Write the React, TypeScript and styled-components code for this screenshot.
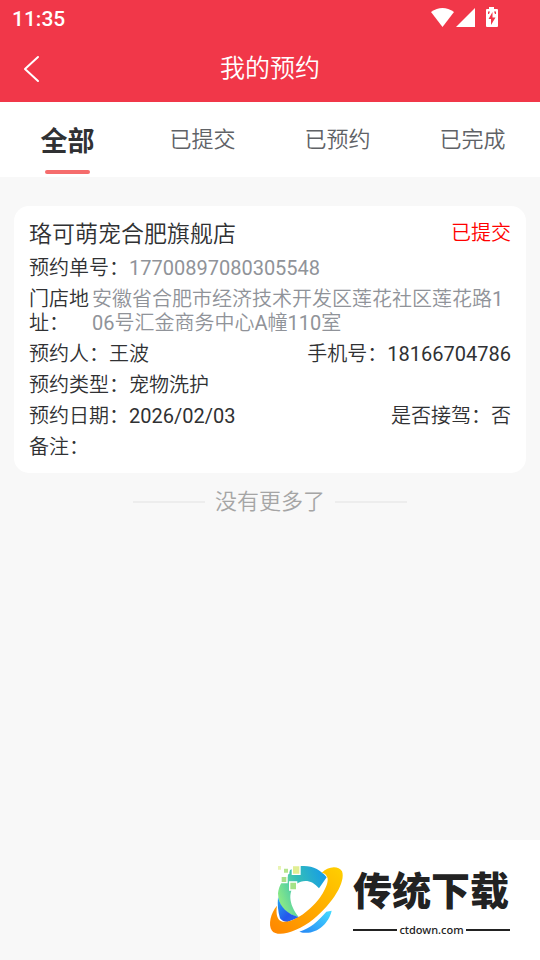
import React, { useState } from "react";
import styled, { createGlobalStyle } from "styled-components";

const GlobalStyle = createGlobalStyle`
  * { box-sizing: border-box; }
  body {
    margin: 0;
    background: #f8f8f8;
    color: #303133;
    font-family: Roboto, "Noto Sans CJK SC DemiLight", "Noto Sans CJK SC", sans-serif;
  }
  button { font-family: inherit; }
`;

const boldFont = 'Roboto, "Noto Sans CJK SC", sans-serif';

const Page = styled.div`
  min-height: 100vh;
  display: flex;
  flex-direction: column;
`;

const Header = styled.header`
  background: #f13749;
  color: #fff;
`;

const StatusBar = styled.div`
  display: flex;
  justify-content: space-between;
  align-items: center;
  height: 36px;
  padding: 0 41px 0 12px;
`;

const Clock = styled.time`
  font-size: 21px;
  font-weight: 500;
  line-height: 36px;
  padding-top: 2px;
`;

const NavBar = styled.div`
  display: grid;
  grid-template-columns: 66px 1fr 66px;
  align-items: center;
  height: 66px;
`;

const BackButton = styled.button`
  display: flex;
  align-items: center;
  height: 66px;
  padding: 0 0 0 22px;
  border: 0;
  background: none;
  color: inherit;
`;

const Title = styled.h1`
  margin: 0;
  font-size: 25px;
  font-weight: 400;
  line-height: 36px;
  text-align: center;
`;

const Tabs = styled.div`
  display: grid;
  grid-template-columns: repeat(4, 1fr);
  background: #fff;
`;

const Tab = styled.button<{ $active: boolean }>`
  display: flex;
  flex-direction: column;
  align-items: center;
  justify-content: space-between;
  height: 75px;
  padding: 0 0 3px;
  border: 0;
  background: none;
  font-family: ${(p) => (p.$active ? boldFont : "inherit")};
  font-size: ${(p) => (p.$active ? 27 : 22)}px;
  font-weight: ${(p) => (p.$active ? 700 : 400)};
  line-height: ${(p) => (p.$active ? 80 : 75)}px;
  color: ${(p) => (p.$active ? "#303133" : "#606266")};

  span { height: 68px; }

  &::after {
    content: "";
    width: 45px;
    height: 4px;
    border-radius: 2px;
    background: ${(p) => (p.$active ? "#f56c6c" : "transparent")};
  }
`;

const Content = styled.main`
  flex: 1;
  padding: 29px 14px;
`;

const Card = styled.article`
  display: flex;
  flex-direction: column;
  gap: 7px;
  padding: 15px 15px 14px;
  border-radius: 15px;
  background: #fff;
  font-size: 20px;
  line-height: 24px;
`;

const Row = styled.div`
  display: flex;
  justify-content: space-between;
`;

const StoreName = styled.h2`
  margin: 0;
  font-size: 23px;
  font-weight: 400;
  line-height: 28px;
`;

const State = styled.span`
  color: #ff0000;
`;

const Field = styled.div`
  display: flex;
`;

const AddressField = styled.div`
  display: grid;
  grid-template-columns: 63px 1fr;
`;

const Value = styled.span`
  color: #909399;
  word-break: break-all;
`;

const EndMark = styled.div`
  display: flex;
  align-items: center;
  justify-content: center;
  gap: 10px;
  padding-top: 13px;
  font-size: 22px;
  line-height: 32px;
  color: #a5a5a5;

  &::before,
  &::after {
    content: "";
    width: 72px;
    height: 2px;
    background: #ededed;
  }
`;

const Watermark = styled.aside`
  position: fixed;
  right: 0;
  bottom: 0;
  display: grid;
  grid-template-columns: 93px 157px;
  width: 280px;
  height: 120px;
  background: #fff;
  color: #222;
`;

const Brand = styled.div`
  display: flex;
  flex-direction: column;
  padding-top: 25px;
`;

const BrandName = styled.strong`
  font-family: ${boldFont};
  font-size: 39px;
  font-weight: 900;
  line-height: 54px;
  white-space: nowrap;
`;

const BrandSite = styled.span`
  display: flex;
  align-items: center;
  gap: 2px;
  font-family: "Noto Sans", sans-serif;
  font-size: 11px;
  font-weight: 500;
  line-height: 22px;

  &::before,
  &::after {
    content: "";
    flex: 1;
    height: 2px;
    background: #222;
  }
`;

function StatusIcons() {
  return (
    <svg width="68" height="24" viewBox="0 0 68 24" fill="#fff" aria-hidden="true">
      <path d="M0 6 Q11.500 -2 23 6 L11.500 21 Z" />
      <path d="M44 2 V21 H25 Z" />
      <path d="M58 1 H63 V3 H66 Q67 3 67 4 V20 Q67 21 66 21 H56 Q55 21 55 20 V4 Q55 3 56 3 H58 Z" />
      <path d="M61.500 6 L57.500 13 H60 V19 L64.500 11.500 H61.500 Z" fill="#f13749" />
      <path d="M57 5.500 H59 L58 8 H57 Z M63 5.500 H65 V8 H64 Z" fill="#f13749" />
    </svg>
  );
}

function Logo() {
  return (
    <svg width="93" height="120" viewBox="0 0 279 360" aria-hidden="true">
      <defs>
        <linearGradient id="ring" x1="0" y1="1" x2="1" y2="0">
          <stop offset="0" stopColor="#ff8500" />
          <stop offset="1" stopColor="#ffd000" />
        </linearGradient>
        <linearGradient id="arc" x1="0" y1="0.600" x2="1" y2="0.200">
          <stop offset="0" stopColor="#8bea85" />
          <stop offset="0.450" stopColor="#35bfb6" />
          <stop offset="1" stopColor="#159be8" />
        </linearGradient>
        <linearGradient id="deep" x1="0" y1="0" x2="1" y2="1">
          <stop offset="0" stopColor="#22a7ee" />
          <stop offset="0.600" stopColor="#2457ec" />
          <stop offset="1" stopColor="#2a6cf2" />
        </linearGradient>
        <linearGradient id="tail" x1="0" y1="1" x2="1" y2="0">
          <stop offset="0" stopColor="#2586f5" />
          <stop offset="1" stopColor="#44dcff" />
        </linearGradient>
      </defs>
      <path d="M118 79 C153 74 181 88 200 112 L177 145 C158 121 131 116 109 132 C84 151 84 191 116 231 C76 224 55 199 54 160 C57 136 67 120 82 111 L90 90 Z" fill="url(#arc)" />
      <path d="M54 172 C62 202 80 222 118 232 L82 246 Q66 244 60 235 Q51 205 54 172Z" fill="url(#deep)" />
      <path d="M185 99 C202 79 235 75 246 94 C258 125 219 190 160 238 C113 275 54 294 36 272 C23 253 33 218 51 197 C47 220 51 242 68 245 C94 249 132 225 160 196 C190 166 210 124 201 110 Q197 100 185 99Z" fill="url(#ring)" />
      <path d="M215 212 C206 254 162 290 118 275 C151 264 173 245 199 215 Z" fill="url(#tail)" />
      <g stroke="#fff" strokeWidth="4">
        <path d="M97 77 H120 V103 H97Z" fill="#e1ee92" />
        <path d="M89 126 H110 V150 H89Z" fill="#a4e287" />
        <path d="M63 109 H81 V128 H63Z" fill="#a9df89" />
        <path d="M70 84 H86 V100 H70Z" fill="#b4e58d" />
        <path d="M52 76 H65 V91 H52Z" fill="#e9f4b4" />
      </g>
    </svg>
  );
}

const tabs = ["全部", "已提交", "已预约", "已完成"];

export default function App() {
  const [active, setActive] = useState(0);

  return (
    <Page lang="zh-CN">
      <GlobalStyle />
      <Header>
        <StatusBar>
          <Clock>11:35</Clock>
          <StatusIcons />
        </StatusBar>
        <NavBar>
          <BackButton aria-label="返回">
            <svg width="20" height="28" viewBox="0 0 20 28" fill="none" stroke="#fff" strokeWidth="2" strokeLinecap="round" strokeLinejoin="round">
              <path d="M16 2 L3 14 L16 26" />
            </svg>
          </BackButton>
          <Title>我的预约</Title>
        </NavBar>
      </Header>
      <Tabs role="tablist">
        {tabs.map((label, i) => (
          <Tab key={label} role="tab" aria-selected={i === active} $active={i === active} onClick={() => setActive(i)}>
            <span>{label}</span>
          </Tab>
        ))}
      </Tabs>
      <Content>
        <Card>
          <Row>
            <StoreName>珞可萌宠合肥旗舰店</StoreName>
            <State>已提交</State>
          </Row>
          <Field>
            <span>预约单号：</span>
            <Value>17700897080305548</Value>
          </Field>
          <AddressField>
            <span>门店地址：</span>
            <Value>安徽省合肥市经济技术开发区莲花社区莲花路106号汇金商务中心A幢110室</Value>
          </AddressField>
          <Row>
            <span>预约人：王波</span>
            <span>手机号：18166704786</span>
          </Row>
          <Field>预约类型：宠物洗护</Field>
          <Row>
            <span>预约日期：2026/02/03</span>
            <span>是否接驾：否</span>
          </Row>
          <Field>备注：</Field>
        </Card>
        <EndMark>没有更多了</EndMark>
      </Content>
      <Watermark>
        <Logo />
        <Brand>
          <BrandName>传统下载</BrandName>
          <BrandSite>ctdown.com</BrandSite>
        </Brand>
      </Watermark>
    </Page>
  );
}
